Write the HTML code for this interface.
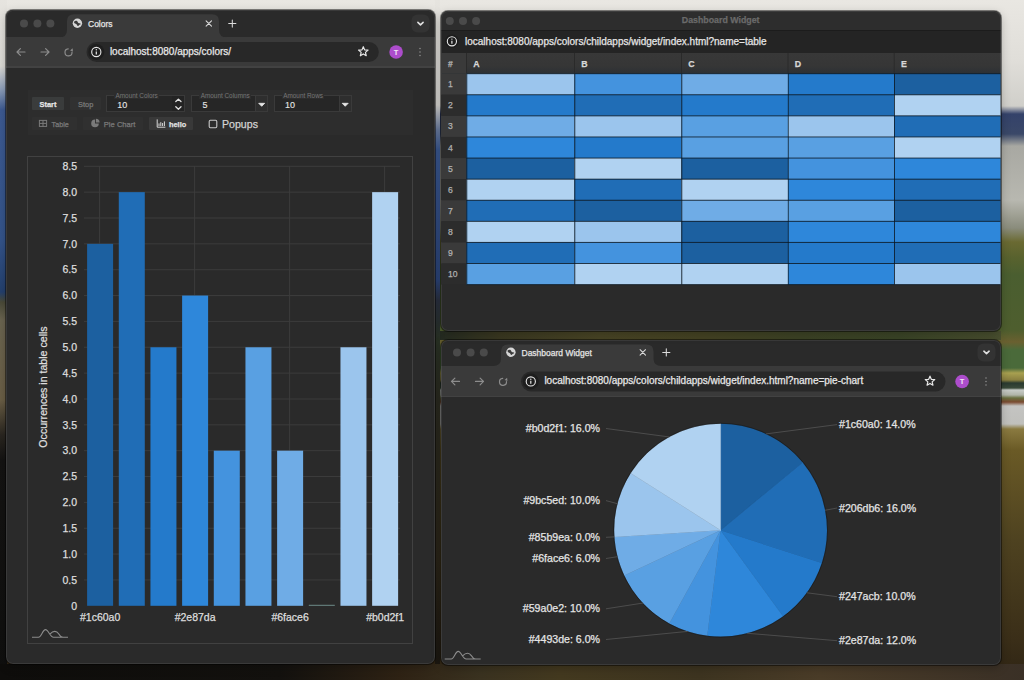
<!DOCTYPE html>
<html><head><meta charset="utf-8">
<style>
*{box-sizing:border-box;margin:0;padding:0}
html,body{width:1024px;height:680px;overflow:hidden;background:#1a1a14;font-family:"Liberation Sans",sans-serif}
.abs{position:absolute}
.win{position:absolute;border-radius:7px;overflow:hidden;box-shadow:0 0 0 1px rgba(0,0,0,.45),0 3px 10px rgba(0,0,0,.25)}
.win:after{content:"";position:absolute;left:0;top:0;right:0;bottom:0;border-radius:7px;box-shadow:inset 0 0 0 1px rgba(255,255,255,.08);pointer-events:none}
.t{position:absolute;white-space:nowrap;line-height:1;-webkit-text-stroke:0.25px currentColor}
svg.full{position:absolute;left:0;top:0;width:1024px;height:680px;overflow:visible}
</style></head><body>

<div class="abs" style="left:0;top:0;width:1024px;height:680px;background:linear-gradient(180deg,#e9e7e2 0px,#e0ded9 60px,#d0cfca 106px,#34426a 114px,#3a4868 134px,#a8a8a2 146px,#b8b8b0 200px,#8a8c7c 228px,#6a6a32 242px,#58622e 258px,#4a5e30 275px,#4e5e2e 330px,#6a6030 342px,#4a6a3a 350px,#4a6a3a 368px,#a8a050 373px,#8a8040 380px,#2a3a30 383px,#3a4a3a 388px,#c8ccc8 390px,#b0b4a8 395px,#6a7040 398px,#7a4a30 402px,#c4c4c2 406px,#c0c0bc 424px,#8a7a40 429px,#6a5a26 450px,#4e4220 540px,#3a2e18 640px,#2e2414 680px)"></div>
<div class="abs" style="left:0;top:0;width:7px;height:680px;background:linear-gradient(180deg,#e6e4df 0px,#dcdad5 66px,#8a9cb8 90px,#3d5a92 110px,#34548a 240px,#24406e 292px,#4a4a38 302px,#6a6450 320px,#6a5e45 400px,#2a2620 435px,#141312 460px,#0f0f0e 680px)"></div>
<div class="abs" style="left:435px;top:0;width:5px;height:680px;background:linear-gradient(180deg,#e6e4df 0px,#d8d6d2 105px,#6a7ca0 130px,#3a5890 150px,#2c4478 280px,#2a3040 300px,#2a3225 340px,#2a2a20 400px,#2a2418 560px,#1a1610 680px)"></div>
<div class="abs" style="left:0;top:664px;width:1024px;height:16px;background:linear-gradient(90deg,#0e0d0b 0px,#13110e 280px,#2e2214 400px,#3a3220 480px,#43391f 560px,#3d3420 700px,#4a3c28 820px,#3a3026 1024px)"></div>
<div class="abs" style="left:440px;top:331px;width:561px;height:9px;background:linear-gradient(90deg,#262c22 0px,#3c3a22 60px,#4a4626 160px,#464424 260px,#3e4426 360px,#3c4628 460px,#4a5030 561px)"></div>

<div class="win" style="left:6px;top:9.5px;width:428.5px;height:654.0px;background:#2a2a2a">
 <div class="abs" style="left:0;top:0;width:428.5px;height:27px;background:#2a2a2a"></div>
 <div class="abs" style="left:0;top:27px;width:428.5px;height:31px;background:#3a3a3a"></div>
 <div class="abs" style="left:0;top:56.5px;width:428.5px;height:1.5px;background:#424242"></div>
 <svg style="position:absolute;left:0;top:0" width="428.5" height="28"><path d="M53,27.5 Q61,27.5 61,20 L61,11.3 Q61,4.300000000000001 68,4.300000000000001 L206,4.300000000000001 Q213,4.300000000000001 213,11.3 L213,20 Q213,27.5 221,27.5 Z" fill="#3a3a3a"/></svg>
</div>
<svg class="full" viewBox="0 0 1024 680"><circle cx="24" cy="23.5" r="4" fill="#4a4a4a"/><circle cx="37.4" cy="23.5" r="4" fill="#4a4a4a"/><circle cx="50.4" cy="23.5" r="4" fill="#4a4a4a"/><g transform="translate(77.4,23.3)"><circle r="4.7" fill="#d6d6d6"/><path d="M-3.3,-1.6 C-2.4,-2.6 -1.2,-2.8 -0.4,-2.2 C0.4,-1.6 0.2,-0.6 1,-0.2 C1.8,0.2 2.8,0 3.4,0.8 C2.6,1.4 1.8,1.6 1.2,2.4 C0.6,3 -0.2,2.6 -0.4,1.8 C-0.6,0.8 -1.6,0.6 -2.4,0.2 C-3,-0.2 -3.6,-0.8 -3.3,-1.6 Z" fill="#3a3a3a"/></g><path d="M206.10000000000002,20.8L211.5,26.2M211.5,20.8L206.10000000000002,26.2" stroke="#dcdcdc" stroke-width="1.05" stroke-linecap="round"/><path d="M228.70000000000002,23.5L235.9,23.5M232.3,19.9L232.3,27.1" stroke="#dcdcdc" stroke-width="1.05" stroke-linecap="round"/><rect x="411.5" y="14.5" width="18" height="18" rx="6" fill="#333"/><path d="M417.9,22.3L420.5,24.8L423.1,22.3" fill="none" stroke="#e0e0e0" stroke-width="1.6" stroke-linecap="round" stroke-linejoin="round"/><path d="M25,52.0L17,52.0M20.4,48.6L17,52.0L20.4,55.4" fill="none" stroke="#8c8c8c" stroke-width="1.2" stroke-linecap="round" stroke-linejoin="round"/><path d="M41,52.0L49,52.0M45.6,48.6L49,52.0L45.6,55.4" fill="none" stroke="#8c8c8c" stroke-width="1.2" stroke-linecap="round" stroke-linejoin="round"/><path d="M71.99,52.09A3.5,3.5 0 1 1 68.19,48.91" fill="none" stroke="#8c8c8c" stroke-width="1.2" stroke-linecap="round"/><path d="M70.4,51.1L73.4,51.1L71.9,48.1Z" fill="#8c8c8c" transform="rotate(20 71.9 50.1)"/><rect x="86.5" y="42.0" width="292.3" height="20" rx="10" fill="#282828"/><circle cx="96.3" cy="52.0" r="8" fill="#1e1e1e"/><circle cx="96.3" cy="52.0" r="4.6" fill="none" stroke="#e8e8e8" stroke-width="1.1"/><path d="M96.3,51.4L96.3,54.4" stroke="#e8e8e8" stroke-width="1.2"/><circle cx="96.3" cy="49.8" r="0.7" fill="#e8e8e8"/><polygon points="363.30,46.70 364.62,49.88 368.06,50.15 365.44,52.40 366.24,55.75 363.30,53.95 360.36,55.75 361.16,52.40 358.54,50.15 361.98,49.88" fill="none" stroke="#e8e8e8" stroke-width="1.2" stroke-linejoin="round"/><circle cx="396.1" cy="52.0" r="6.8" fill="#ad4dcc"/><text x="396.1" y="54.6" font-family="Liberation Sans" font-size="7.5" font-weight="700" fill="#f0e6f4" text-anchor="middle">T</text><circle cx="420.0" cy="48.5" r="0.8" fill="#8a8a8a"/><circle cx="420.0" cy="52.0" r="0.8" fill="#8a8a8a"/><circle cx="420.0" cy="55.5" r="0.8" fill="#8a8a8a"/></svg>
<div class="t" style="left:88px;top:19.75px;font-size:8.5px;color:#e4e4e4;font-weight:400;">Colors</div>
<div class="t" style="left:109.9px;top:47.0px;font-size:10px;color:#e8e8e8;font-weight:400;">localhost:8080/apps/colors/</div>
<div class="win" style="left:440.5px;top:340px;width:560.0px;height:324.5px;background:#2a2a2a">
 <div class="abs" style="left:0;top:0;width:560.0px;height:25.6px;background:#2a2a2a"></div>
 <div class="abs" style="left:0;top:25.6px;width:560.0px;height:31.7px;background:#3a3a3a"></div>
 <div class="abs" style="left:0;top:55.8px;width:560.0px;height:1.5px;background:#424242"></div>
 <svg style="position:absolute;left:0;top:0" width="560.0" height="26.6"><path d="M52.0,26.1 Q60.0,26.1 60.0,18.6 L60.0,11.5 Q60.0,4.5 67.0,4.5 L205.5,4.5 Q212.5,4.5 212.5,11.5 L212.5,18.6 Q212.5,26.1 220.5,26.1 Z" fill="#3a3a3a"/></svg>
</div>
<svg class="full" viewBox="0 0 1024 680"><circle cx="457" cy="352.4" r="4" fill="#4a4a4a"/><circle cx="470.6" cy="352.4" r="4" fill="#4a4a4a"/><circle cx="483.8" cy="352.4" r="4" fill="#4a4a4a"/><g transform="translate(510.9,352.2)"><circle r="4.7" fill="#d6d6d6"/><path d="M-3.3,-1.6 C-2.4,-2.6 -1.2,-2.8 -0.4,-2.2 C0.4,-1.6 0.2,-0.6 1,-0.2 C1.8,0.2 2.8,0 3.4,0.8 C2.6,1.4 1.8,1.6 1.2,2.4 C0.6,3 -0.2,2.6 -0.4,1.8 C-0.6,0.8 -1.6,0.6 -2.4,0.2 C-3,-0.2 -3.6,-0.8 -3.3,-1.6 Z" fill="#3a3a3a"/></g><path d="M640.0999999999999,349.7L645.5,355.09999999999997M645.5,349.7L640.0999999999999,355.09999999999997" stroke="#dcdcdc" stroke-width="1.05" stroke-linecap="round"/><path d="M662.6999999999999,352.4L669.9,352.4M666.3,348.79999999999995L666.3,356.0" stroke="#dcdcdc" stroke-width="1.05" stroke-linecap="round"/><rect x="977.5" y="343.4" width="18" height="18" rx="6" fill="#333"/><path d="M983.9,351.2L986.5,353.7L989.1,351.2" fill="none" stroke="#e0e0e0" stroke-width="1.6" stroke-linecap="round" stroke-linejoin="round"/><path d="M459.5,381.45000000000005L451.5,381.45000000000005M454.9,378.05000000000007L451.5,381.45000000000005L454.9,384.85" fill="none" stroke="#8c8c8c" stroke-width="1.2" stroke-linecap="round" stroke-linejoin="round"/><path d="M475.5,381.45000000000005L483.5,381.45000000000005M480.1,378.05000000000007L483.5,381.45000000000005L480.1,384.85" fill="none" stroke="#8c8c8c" stroke-width="1.2" stroke-linecap="round" stroke-linejoin="round"/><path d="M506.49,381.54A3.5,3.5 0 1 1 502.69,378.36" fill="none" stroke="#8c8c8c" stroke-width="1.2" stroke-linecap="round"/><path d="M504.9,380.55L507.9,380.55L506.4,377.55Z" fill="#8c8c8c" transform="rotate(20 506.4 379.55)"/><rect x="521.0" y="371.45000000000005" width="424.5" height="20" rx="10" fill="#282828"/><circle cx="530.8" cy="381.45000000000005" r="8" fill="#1e1e1e"/><circle cx="530.8" cy="381.45000000000005" r="4.6" fill="none" stroke="#e8e8e8" stroke-width="1.1"/><path d="M530.8,380.85L530.8,383.85" stroke="#e8e8e8" stroke-width="1.2"/><circle cx="530.8" cy="379.25000000000006" r="0.7" fill="#e8e8e8"/><polygon points="930.00,376.15 931.32,379.33 934.76,379.60 932.14,381.85 932.94,385.20 930.00,383.40 927.06,385.20 927.86,381.85 925.24,379.60 928.68,379.33" fill="none" stroke="#e8e8e8" stroke-width="1.2" stroke-linejoin="round"/><circle cx="962.1" cy="381.45000000000005" r="6.8" fill="#ad4dcc"/><text x="962.1" y="384.05000000000007" font-family="Liberation Sans" font-size="7.5" font-weight="700" fill="#f0e6f4" text-anchor="middle">T</text><circle cx="986.0" cy="377.95000000000005" r="0.8" fill="#8a8a8a"/><circle cx="986.0" cy="381.45000000000005" r="0.8" fill="#8a8a8a"/><circle cx="986.0" cy="384.95000000000005" r="0.8" fill="#8a8a8a"/></svg>
<div class="t" style="left:521.5px;top:348.65px;font-size:8.5px;color:#e4e4e4;font-weight:400;">Dashboard Widget</div>
<div class="t" style="left:544.4px;top:376.45000000000005px;font-size:10px;color:#e8e8e8;font-weight:400;">localhost:8080/apps/colors/childapps/widget/index.html?name=pie-chart</div>
<div class="abs" style="left:28px;top:90px;width:385px;height:45px;background:#2d2d2d"></div>
<div class="abs" style="left:32px;top:96.7px;width:32px;height:13.099999999999994px;background:#3a3c3c;border-radius:1px"></div>
<div class="t" style="left:-152px;width:400px;text-align:center;top:100.5px;font-size:7.4px;color:#e6e6e6;font-weight:700;">Start</div>
<div class="abs" style="left:70.4px;top:96.7px;width:30.599999999999994px;height:13.099999999999994px;background:#313131;border-radius:1px"></div>
<div class="t" style="left:-114.3px;width:400px;text-align:center;top:100.5px;font-size:7.4px;color:#7a7a7a;font-weight:400;">Stop</div>
<div class="abs" style="left:106px;top:95.2px;width:79px;height:17.099999999999994px;border:1px solid #3a3a3a;background:#262626"></div>
<div class="abs" style="left:171.8px;top:96.2px;width:12.199999999999989px;height:15.099999999999994px;background:#232323"></div>
<div class="t" style="left:114px;top:91.8px;font-size:6.4px;color:#777;background:#2d2d2d;padding:0 1.5px;line-height:7px;-webkit-text-stroke:0">Amount Colors</div>
<div class="t" style="left:117.2px;top:100.75px;font-size:9px;color:#e8e8e8;font-weight:400;-webkit-text-stroke:0.1px #e8e8e8">10</div>
<div class="abs" style="left:191.2px;top:95.2px;width:77.30000000000001px;height:17.099999999999994px;border:1px solid #3a3a3a;background:#262626"></div>
<div class="abs" style="left:255.3px;top:96.2px;width:12.199999999999989px;height:15.099999999999994px;background:#2e2e2e;border-left:1px solid #3a3a3a"></div>
<div class="t" style="left:199.2px;top:91.8px;font-size:6.4px;color:#777;background:#2d2d2d;padding:0 1.5px;line-height:7px;-webkit-text-stroke:0">Amount Columns</div>
<div class="t" style="left:202.39999999999998px;top:100.75px;font-size:9px;color:#e8e8e8;font-weight:400;-webkit-text-stroke:0.1px #e8e8e8">5</div>
<div class="abs" style="left:273.7px;top:95.2px;width:78.30000000000001px;height:17.099999999999994px;border:1px solid #3a3a3a;background:#262626"></div>
<div class="abs" style="left:338.5px;top:96.2px;width:12.5px;height:15.099999999999994px;background:#2e2e2e;border-left:1px solid #3a3a3a"></div>
<div class="t" style="left:281.7px;top:91.8px;font-size:6.4px;color:#777;background:#2d2d2d;padding:0 1.5px;line-height:7px;-webkit-text-stroke:0">Amount Rows</div>
<div class="t" style="left:284.9px;top:100.75px;font-size:9px;color:#e8e8e8;font-weight:400;-webkit-text-stroke:0.1px #e8e8e8">10</div>
<svg class="full" viewBox="0 0 1024 680"><path d="M175.8,101.6L178.4,99.2L181,101.6M175.8,106.8L178.4,109.2L181,106.8" fill="none" stroke="#e0e0e0" stroke-width="1.3" stroke-linecap="round" stroke-linejoin="round"/><path d="M258.7,103.3L264.7,103.3L261.7,106.3Z" fill="#e8e8e8" stroke="#e8e8e8" stroke-width="0.8" stroke-linejoin="round"/><path d="M342.2,103.3L348.2,103.3L345.2,106.3Z" fill="#e8e8e8" stroke="#e8e8e8" stroke-width="0.8" stroke-linejoin="round"/></svg>
<div class="abs" style="left:32.3px;top:116.8px;width:44.400000000000006px;height:12.799999999999997px;background:#303030;border-radius:1px"></div>
<div class="t" style="left:51.6px;top:120.80000000000001px;font-size:7.2px;color:#7a7a7a;font-weight:400;">Table</div>
<div class="abs" style="left:83px;top:116.8px;width:60px;height:12.799999999999997px;background:#303030;border-radius:1px"></div>
<div class="t" style="left:103.8px;top:120.60000000000001px;font-size:7.6px;color:#7a7a7a;font-weight:400;">Pie Chart</div>
<div class="abs" style="left:149.3px;top:116.8px;width:43.5px;height:12.799999999999997px;background:#393939;border-radius:1px"></div>
<div class="t" style="left:169px;top:120.7px;font-size:7.4px;color:#e2e2e2;font-weight:700;">hello</div>
<svg class="full" viewBox="0 0 1024 680"><rect x="39.4" y="120.4" width="7.2" height="6" fill="none" stroke="#7a7a7a" stroke-width="1"/><path d="M39.4,123.4L46.6,123.4M43,120.4L43,126.4" stroke="#7a7a7a" stroke-width="1"/><path d="M95,119.6 A3.8,3.8 0 1 0 98.8,123.4 L95,123.4 Z" fill="#7a7a7a"/><path d="M95.9,118.8 A3.8,3.8 0 0 1 99.6,122.5 L95.9,122.5 Z" fill="#7a7a7a"/><path d="M157.2,119.4L157.2,127.2L165.4,127.2" fill="none" stroke="#d8d8d8" stroke-width="1"/><path d="M159,126L159,123.4M160.8,126L160.8,122.2M162.6,126L162.6,123M164.4,126L164.4,121.4" stroke="#d8d8d8" stroke-width="1"/><rect x="209.2" y="120.2" width="7.6" height="7.6" rx="1.2" fill="none" stroke="#c8c8c8" stroke-width="1.1"/></svg>
<div class="t" style="left:222px;top:119.0px;font-size:10.6px;color:#d2d2d2;font-weight:400;">Popups</div>
<div class="abs" style="left:27px;top:156px;width:386px;height:488px;border:1px solid #414141"></div>
<svg class="full" viewBox="0 0 1024 680"><line x1="84" y1="579.95" x2="400" y2="579.95" stroke="#3c3c3c" stroke-width="1"/><line x1="84" y1="554.09" x2="400" y2="554.09" stroke="#3c3c3c" stroke-width="1"/><line x1="84" y1="528.24" x2="400" y2="528.24" stroke="#3c3c3c" stroke-width="1"/><line x1="84" y1="502.39" x2="400" y2="502.39" stroke="#3c3c3c" stroke-width="1"/><line x1="84" y1="476.54" x2="400" y2="476.54" stroke="#3c3c3c" stroke-width="1"/><line x1="84" y1="450.68" x2="400" y2="450.68" stroke="#3c3c3c" stroke-width="1"/><line x1="84" y1="424.83" x2="400" y2="424.83" stroke="#3c3c3c" stroke-width="1"/><line x1="84" y1="398.98" x2="400" y2="398.98" stroke="#3c3c3c" stroke-width="1"/><line x1="84" y1="373.12" x2="400" y2="373.12" stroke="#3c3c3c" stroke-width="1"/><line x1="84" y1="347.27" x2="400" y2="347.27" stroke="#3c3c3c" stroke-width="1"/><line x1="84" y1="321.42" x2="400" y2="321.42" stroke="#3c3c3c" stroke-width="1"/><line x1="84" y1="295.56" x2="400" y2="295.56" stroke="#3c3c3c" stroke-width="1"/><line x1="84" y1="269.71" x2="400" y2="269.71" stroke="#3c3c3c" stroke-width="1"/><line x1="84" y1="243.86" x2="400" y2="243.86" stroke="#3c3c3c" stroke-width="1"/><line x1="84" y1="218.01" x2="400" y2="218.01" stroke="#3c3c3c" stroke-width="1"/><line x1="84" y1="192.15" x2="400" y2="192.15" stroke="#3c3c3c" stroke-width="1"/><line x1="84" y1="166.30" x2="400" y2="166.30" stroke="#3c3c3c" stroke-width="1"/><line x1="99.60" y1="166" x2="99.60" y2="605" stroke="#3c3c3c" stroke-width="1"/><line x1="194.62" y1="166" x2="194.62" y2="605" stroke="#3c3c3c" stroke-width="1"/><line x1="289.62" y1="166" x2="289.62" y2="605" stroke="#3c3c3c" stroke-width="1"/><line x1="384.63" y1="166" x2="384.63" y2="605" stroke="#3c3c3c" stroke-width="1"/><rect x="87.10" y="243.86" width="26" height="361.94" fill="#1c60a0"/><rect x="118.78" y="192.15" width="26" height="413.65" fill="#206db6"/><rect x="150.44" y="347.27" width="26" height="258.53" fill="#247acb"/><rect x="182.12" y="295.56" width="26" height="310.24" fill="#2e87da"/><rect x="213.79" y="450.68" width="26" height="155.12" fill="#4493de"/><rect x="245.45" y="347.27" width="26" height="258.53" fill="#59a0e2"/><rect x="277.12" y="450.68" width="26" height="155.12" fill="#6face6"/><rect x="308.80" y="604.80" width="26" height="1" fill="#6d8a88"/><rect x="340.46" y="347.27" width="26" height="258.53" fill="#9bc5ed"/><rect x="372.13" y="192.15" width="26" height="413.65" fill="#b0d2f1"/><path d="M32,637.2 L38.5,637.2 C41.5,637.2 42.5,629.6 45.5,629.6 C48.5,629.6 50,637.2 53.5,637.2 L68,637.2 M50.2,633.8000000000001 C53,630.8000000000001 56.5,630.4000000000001 58.6,633.8000000000001 C59.8,636.0 60.6,637.2 63,637.2" fill="none" stroke="#8c8c8c" stroke-width="1.1"/></svg>
<div class="t" style="right:947px;top:600.55px;font-size:10.5px;color:#dedede;font-weight:400;">0</div>
<div class="t" style="right:947px;top:574.6970588235293px;font-size:10.5px;color:#dedede;font-weight:400;">0.5</div>
<div class="t" style="right:947px;top:548.8441176470587px;font-size:10.5px;color:#dedede;font-weight:400;">1.0</div>
<div class="t" style="right:947px;top:522.9911764705882px;font-size:10.5px;color:#dedede;font-weight:400;">1.5</div>
<div class="t" style="right:947px;top:497.13823529411764px;font-size:10.5px;color:#dedede;font-weight:400;">2.0</div>
<div class="t" style="right:947px;top:471.285294117647px;font-size:10.5px;color:#dedede;font-weight:400;">2.5</div>
<div class="t" style="right:947px;top:445.4323529411764px;font-size:10.5px;color:#dedede;font-weight:400;">3.0</div>
<div class="t" style="right:947px;top:419.57941176470587px;font-size:10.5px;color:#dedede;font-weight:400;">3.5</div>
<div class="t" style="right:947px;top:393.7264705882353px;font-size:10.5px;color:#dedede;font-weight:400;">4.0</div>
<div class="t" style="right:947px;top:367.8735294117647px;font-size:10.5px;color:#dedede;font-weight:400;">4.5</div>
<div class="t" style="right:947px;top:342.0205882352941px;font-size:10.5px;color:#dedede;font-weight:400;">5.0</div>
<div class="t" style="right:947px;top:316.16764705882355px;font-size:10.5px;color:#dedede;font-weight:400;">5.5</div>
<div class="t" style="right:947px;top:290.31470588235294px;font-size:10.5px;color:#dedede;font-weight:400;">6.0</div>
<div class="t" style="right:947px;top:264.4617647058824px;font-size:10.5px;color:#dedede;font-weight:400;">6.5</div>
<div class="t" style="right:947px;top:238.60882352941178px;font-size:10.5px;color:#dedede;font-weight:400;">7.0</div>
<div class="t" style="right:947px;top:212.75588235294123px;font-size:10.5px;color:#dedede;font-weight:400;">7.5</div>
<div class="t" style="right:947px;top:186.90294117647062px;font-size:10.5px;color:#dedede;font-weight:400;">8.0</div>
<div class="t" style="right:947px;top:161.05px;font-size:10.5px;color:#dedede;font-weight:400;">8.5</div>
<div class="t" style="left:-99.89500000000001px;width:400px;text-align:center;top:612.35px;font-size:10.5px;color:#dedede;font-weight:400;">#1c60a0</div>
<div class="t" style="left:-4.884999999999991px;width:400px;text-align:center;top:612.35px;font-size:10.5px;color:#dedede;font-weight:400;">#2e87da</div>
<div class="t" style="left:90.125px;width:400px;text-align:center;top:612.35px;font-size:10.5px;color:#dedede;font-weight:400;">#6face6</div>
<div class="t" style="left:185.135px;width:400px;text-align:center;top:612.35px;font-size:10.5px;color:#dedede;font-weight:400;">#b0d2f1</div>
<div class="t" style="left:43.4px;top:386.5px;font-size:10.6px;color:#dedede;transform:translate(-50%,-50%) rotate(-90deg);transform-origin:center">Occurrences in table cells</div>
<div class="win" style="left:440.5px;top:11px;width:560px;height:320px;background:#2a2a2a"><div class="abs" style="left:0;top:0;width:560px;height:18.5px;background:#2d2d2d"></div><div class="abs" style="left:0;top:18.5px;width:560px;height:1px;background:#1c1c1c"></div><div class="abs" style="left:0;top:19.5px;width:560px;height:22.5px;background:#242424"></div><div class="abs" style="left:0;top:42px;width:560px;height:20.5px;background:linear-gradient(180deg,#383838 0%,#363636 60%,#2c3034 100%)"></div></div>
<svg class="full" viewBox="0 0 1024 680"><circle cx="449.8" cy="20.9" r="4" fill="#4a4a4a"/><circle cx="463" cy="20.9" r="4" fill="#4a4a4a"/><circle cx="476.1" cy="20.9" r="4" fill="#4a4a4a"/><circle cx="451.9" cy="41.3" r="6.8" fill="#1c1c1c"/><circle cx="451.9" cy="41.3" r="4.6" fill="none" stroke="#e8e8e8" stroke-width="1.1"/><path d="M451.9,40.699999999999996L451.9,43.699999999999996" stroke="#e8e8e8" stroke-width="1.2"/><circle cx="451.9" cy="39.099999999999994" r="0.7" fill="#e8e8e8"/><rect x="441" y="53" width="25.5" height="20.5" fill="#3a3a3a"/><line x1="466.5" y1="53" x2="466.5" y2="73.5" stroke="#2a2a2a" stroke-width="1"/><line x1="574.5" y1="53" x2="574.5" y2="73.5" stroke="#2a2a2a" stroke-width="1"/><line x1="681.5" y1="53" x2="681.5" y2="73.5" stroke="#2a2a2a" stroke-width="1"/><line x1="788" y1="53" x2="788" y2="73.5" stroke="#2a2a2a" stroke-width="1"/><line x1="894.2" y1="53" x2="894.2" y2="73.5" stroke="#2a2a2a" stroke-width="1"/><rect x="441" y="73.70" width="25.5" height="21.09" fill="#3a3a3a"/><rect x="466.50" y="73.70" width="108.00" height="21.09" fill="#9bc5ed"/><rect x="574.50" y="73.70" width="107.00" height="21.09" fill="#4493de"/><rect x="681.50" y="73.70" width="106.50" height="21.09" fill="#6face6"/><rect x="788.00" y="73.70" width="106.20" height="21.09" fill="#247acb"/><rect x="894.20" y="73.70" width="106.30" height="21.09" fill="#1c60a0"/><rect x="441" y="94.79" width="25.5" height="21.09" fill="#2c2c2c"/><rect x="466.50" y="94.79" width="108.00" height="21.09" fill="#247acb"/><rect x="574.50" y="94.79" width="107.00" height="21.09" fill="#206db6"/><rect x="681.50" y="94.79" width="106.50" height="21.09" fill="#247acb"/><rect x="788.00" y="94.79" width="106.20" height="21.09" fill="#206db6"/><rect x="894.20" y="94.79" width="106.30" height="21.09" fill="#b0d2f1"/><rect x="441" y="115.88" width="25.5" height="21.09" fill="#3a3a3a"/><rect x="466.50" y="115.88" width="108.00" height="21.09" fill="#6face6"/><rect x="574.50" y="115.88" width="107.00" height="21.09" fill="#9bc5ed"/><rect x="681.50" y="115.88" width="106.50" height="21.09" fill="#59a0e2"/><rect x="788.00" y="115.88" width="106.20" height="21.09" fill="#9bc5ed"/><rect x="894.20" y="115.88" width="106.30" height="21.09" fill="#206db6"/><rect x="441" y="136.97" width="25.5" height="21.09" fill="#2c2c2c"/><rect x="466.50" y="136.97" width="108.00" height="21.09" fill="#2e87da"/><rect x="574.50" y="136.97" width="107.00" height="21.09" fill="#247acb"/><rect x="681.50" y="136.97" width="106.50" height="21.09" fill="#59a0e2"/><rect x="788.00" y="136.97" width="106.20" height="21.09" fill="#59a0e2"/><rect x="894.20" y="136.97" width="106.30" height="21.09" fill="#b0d2f1"/><rect x="441" y="158.06" width="25.5" height="21.09" fill="#3a3a3a"/><rect x="466.50" y="158.06" width="108.00" height="21.09" fill="#1c60a0"/><rect x="574.50" y="158.06" width="107.00" height="21.09" fill="#b0d2f1"/><rect x="681.50" y="158.06" width="106.50" height="21.09" fill="#1c60a0"/><rect x="788.00" y="158.06" width="106.20" height="21.09" fill="#4493de"/><rect x="894.20" y="158.06" width="106.30" height="21.09" fill="#2e87da"/><rect x="441" y="179.15" width="25.5" height="21.09" fill="#2c2c2c"/><rect x="466.50" y="179.15" width="108.00" height="21.09" fill="#b0d2f1"/><rect x="574.50" y="179.15" width="107.00" height="21.09" fill="#206db6"/><rect x="681.50" y="179.15" width="106.50" height="21.09" fill="#b0d2f1"/><rect x="788.00" y="179.15" width="106.20" height="21.09" fill="#2e87da"/><rect x="894.20" y="179.15" width="106.30" height="21.09" fill="#206db6"/><rect x="441" y="200.24" width="25.5" height="21.09" fill="#3a3a3a"/><rect x="466.50" y="200.24" width="108.00" height="21.09" fill="#206db6"/><rect x="574.50" y="200.24" width="107.00" height="21.09" fill="#1c60a0"/><rect x="681.50" y="200.24" width="106.50" height="21.09" fill="#6face6"/><rect x="788.00" y="200.24" width="106.20" height="21.09" fill="#59a0e2"/><rect x="894.20" y="200.24" width="106.30" height="21.09" fill="#1c60a0"/><rect x="441" y="221.33" width="25.5" height="21.09" fill="#2c2c2c"/><rect x="466.50" y="221.33" width="108.00" height="21.09" fill="#b0d2f1"/><rect x="574.50" y="221.33" width="107.00" height="21.09" fill="#9bc5ed"/><rect x="681.50" y="221.33" width="106.50" height="21.09" fill="#1c60a0"/><rect x="788.00" y="221.33" width="106.20" height="21.09" fill="#2e87da"/><rect x="894.20" y="221.33" width="106.30" height="21.09" fill="#2e87da"/><rect x="441" y="242.42" width="25.5" height="21.09" fill="#3a3a3a"/><rect x="466.50" y="242.42" width="108.00" height="21.09" fill="#206db6"/><rect x="574.50" y="242.42" width="107.00" height="21.09" fill="#4493de"/><rect x="681.50" y="242.42" width="106.50" height="21.09" fill="#1c60a0"/><rect x="788.00" y="242.42" width="106.20" height="21.09" fill="#247acb"/><rect x="894.20" y="242.42" width="106.30" height="21.09" fill="#206db6"/><rect x="441" y="263.51" width="25.5" height="21.09" fill="#2c2c2c"/><rect x="466.50" y="263.51" width="108.00" height="21.09" fill="#59a0e2"/><rect x="574.50" y="263.51" width="107.00" height="21.09" fill="#b0d2f1"/><rect x="681.50" y="263.51" width="106.50" height="21.09" fill="#b0d2f1"/><rect x="788.00" y="263.51" width="106.20" height="21.09" fill="#2e87da"/><rect x="894.20" y="263.51" width="106.30" height="21.09" fill="#9bc5ed"/><g stroke="rgba(10,20,30,0.75)" stroke-width="1"><line x1="466.5" y1="73.70" x2="1000.5" y2="73.70"/><line x1="466.5" y1="94.79" x2="1000.5" y2="94.79"/><line x1="466.5" y1="115.88" x2="1000.5" y2="115.88"/><line x1="466.5" y1="136.97" x2="1000.5" y2="136.97"/><line x1="466.5" y1="158.06" x2="1000.5" y2="158.06"/><line x1="466.5" y1="179.15" x2="1000.5" y2="179.15"/><line x1="466.5" y1="200.24" x2="1000.5" y2="200.24"/><line x1="466.5" y1="221.33" x2="1000.5" y2="221.33"/><line x1="466.5" y1="242.42" x2="1000.5" y2="242.42"/><line x1="466.5" y1="263.51" x2="1000.5" y2="263.51"/><line x1="466.5" y1="284.60" x2="1000.5" y2="284.60"/><line x1="466.80" y1="73.70" x2="466.80" y2="284.60"/><line x1="574.80" y1="73.70" x2="574.80" y2="284.60"/><line x1="681.80" y1="73.70" x2="681.80" y2="284.60"/><line x1="788.30" y1="73.70" x2="788.30" y2="284.60"/><line x1="894.50" y1="73.70" x2="894.50" y2="284.60"/></g></svg>
<div class="t" style="left:520.7px;width:400px;text-align:center;top:16.200000000000003px;font-size:8.8px;color:#6a6a6a;font-weight:700;">Dashboard Widget</div>
<div class="t" style="left:465px;top:36.5px;font-size:10px;color:#e6e6e6;font-weight:400;">localhost:8080/apps/colors/childapps/widget/index.html?name=table</div>
<div class="t" style="left:250.3px;width:400px;text-align:center;top:59.699999999999996px;font-size:8.4px;color:#b0b0b0;font-weight:700;">#</div>
<div class="t" style="left:473.3px;top:59.5px;font-size:8.8px;color:#d8d8d8;font-weight:700;">A</div>
<div class="t" style="left:581.3px;top:59.5px;font-size:8.8px;color:#d8d8d8;font-weight:700;">B</div>
<div class="t" style="left:688.3px;top:59.5px;font-size:8.8px;color:#d8d8d8;font-weight:700;">C</div>
<div class="t" style="left:794.8px;top:59.5px;font-size:8.8px;color:#d8d8d8;font-weight:700;">D</div>
<div class="t" style="left:901.0px;top:59.5px;font-size:8.8px;color:#d8d8d8;font-weight:700;">E</div>
<div class="t" style="left:448px;top:80.245px;font-size:8.6px;color:#b0b0b0;font-weight:400;">1</div>
<div class="t" style="left:448px;top:101.33500000000001px;font-size:8.6px;color:#b0b0b0;font-weight:400;">2</div>
<div class="t" style="left:448px;top:122.425px;font-size:8.6px;color:#b0b0b0;font-weight:400;">3</div>
<div class="t" style="left:448px;top:143.515px;font-size:8.6px;color:#b0b0b0;font-weight:400;">4</div>
<div class="t" style="left:448px;top:164.605px;font-size:8.6px;color:#b0b0b0;font-weight:400;">5</div>
<div class="t" style="left:448px;top:185.695px;font-size:8.6px;color:#b0b0b0;font-weight:400;">6</div>
<div class="t" style="left:448px;top:206.785px;font-size:8.6px;color:#b0b0b0;font-weight:400;">7</div>
<div class="t" style="left:448px;top:227.87499999999997px;font-size:8.6px;color:#b0b0b0;font-weight:400;">8</div>
<div class="t" style="left:448px;top:248.965px;font-size:8.6px;color:#b0b0b0;font-weight:400;">9</div>
<div class="t" style="left:448px;top:270.055px;font-size:8.6px;color:#b0b0b0;font-weight:400;">10</div>
<svg class="full" viewBox="0 0 1024 680"><path d="M720.6,530.2L720.60,423.80A106.4,106.4 0 0 1 802.58,462.38Z" fill="#1c60a0" stroke="#1c60a0" stroke-width="0.4"/><path d="M720.6,530.2L802.58,462.38A106.4,106.4 0 0 1 821.79,563.08Z" fill="#206db6" stroke="#206db6" stroke-width="0.4"/><path d="M720.6,530.2L821.79,563.08A106.4,106.4 0 0 1 783.14,616.28Z" fill="#247acb" stroke="#247acb" stroke-width="0.4"/><path d="M720.6,530.2L783.14,616.28A106.4,106.4 0 0 1 707.26,635.76Z" fill="#2e87da" stroke="#2e87da" stroke-width="0.4"/><path d="M720.6,530.2L707.26,635.76A106.4,106.4 0 0 1 669.34,623.44Z" fill="#4493de" stroke="#4493de" stroke-width="0.4"/><path d="M720.6,530.2L669.34,623.44A106.4,106.4 0 0 1 624.33,575.50Z" fill="#59a0e2" stroke="#59a0e2" stroke-width="0.4"/><path d="M720.6,530.2L624.33,575.50A106.4,106.4 0 0 1 614.41,536.88Z" fill="#6face6" stroke="#6face6" stroke-width="0.4"/><path d="M720.6,530.2L614.41,536.88A106.4,106.4 0 0 1 630.76,473.19Z" fill="#9bc5ed" stroke="#9bc5ed" stroke-width="0.4"/><path d="M720.6,530.2L630.76,473.19A106.4,106.4 0 0 1 720.60,423.80Z" fill="#b0d2f1" stroke="#b0d2f1" stroke-width="0.4"/><circle cx="720.6" cy="530.2" r="106.9" fill="none" stroke="rgba(20,20,20,0.6)" stroke-width="1"/><line x1="837" y1="424.6" x2="765.90" y2="433.93" stroke="#4c4c4c" stroke-width="1"/><line x1="837" y1="508.0" x2="825.12" y2="510.26" stroke="#4c4c4c" stroke-width="1"/><line x1="837" y1="596.7" x2="806.68" y2="592.74" stroke="#4c4c4c" stroke-width="1"/><line x1="837" y1="640.7" x2="747.06" y2="633.26" stroke="#4c4c4c" stroke-width="1"/><line x1="606" y1="639.5" x2="687.72" y2="631.39" stroke="#4c4c4c" stroke-width="1"/><line x1="606" y1="608.8" x2="643.04" y2="603.04" stroke="#4c4c4c" stroke-width="1"/><line x1="606" y1="558.5" x2="617.54" y2="556.66" stroke="#4c4c4c" stroke-width="1"/><line x1="606" y1="537.3" x2="614.41" y2="536.88" stroke="#4c4c4c" stroke-width="1"/><line x1="606" y1="500.6" x2="617.54" y2="503.74" stroke="#4c4c4c" stroke-width="1"/><line x1="606" y1="428.5" x2="669.34" y2="436.96" stroke="#4c4c4c" stroke-width="1"/><path d="M444.7,659 L451.2,659 C454.2,659 455.2,651.4 458.2,651.4 C461.2,651.4 462.7,659 466.2,659 L480.7,659 M462.9,655.6 C465.7,652.6 469.2,652.2 471.3,655.6 C472.5,657.8 473.3,659 475.7,659" fill="none" stroke="#8c8c8c" stroke-width="1.1"/></svg>
<div class="t" style="left:839px;top:419.2px;font-size:10.6px;color:#e4e4e4;font-weight:400;">#1c60a0: 14.0%</div>
<div class="t" style="left:839px;top:502.59999999999997px;font-size:10.6px;color:#e4e4e4;font-weight:400;">#206db6: 16.0%</div>
<div class="t" style="left:839px;top:591.3000000000001px;font-size:10.6px;color:#e4e4e4;font-weight:400;">#247acb: 10.0%</div>
<div class="t" style="left:839px;top:635.3000000000001px;font-size:10.6px;color:#e4e4e4;font-weight:400;">#2e87da: 12.0%</div>
<div class="t" style="right:424px;top:634.1px;font-size:10.6px;color:#e4e4e4;font-weight:400;">#4493de: 6.0%</div>
<div class="t" style="right:424px;top:603.4px;font-size:10.6px;color:#e4e4e4;font-weight:400;">#59a0e2: 10.0%</div>
<div class="t" style="right:424px;top:553.1px;font-size:10.6px;color:#e4e4e4;font-weight:400;">#6face6: 6.0%</div>
<div class="t" style="right:424px;top:531.9px;font-size:10.6px;color:#e4e4e4;font-weight:400;">#85b9ea: 0.0%</div>
<div class="t" style="right:424px;top:495.2px;font-size:10.6px;color:#e4e4e4;font-weight:400;">#9bc5ed: 10.0%</div>
<div class="t" style="right:424px;top:423.09999999999997px;font-size:10.6px;color:#e4e4e4;font-weight:400;">#b0d2f1: 16.0%</div>
</body></html>
